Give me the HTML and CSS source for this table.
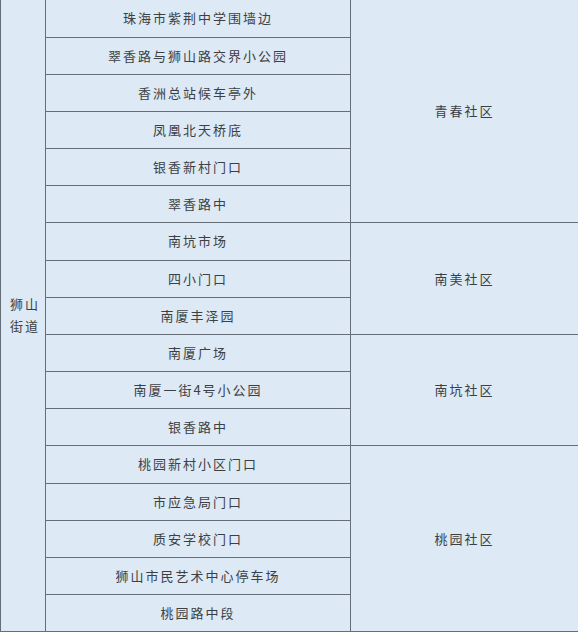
FILE: index.html
```html
<!DOCTYPE html>
<html lang="zh">
<head>
<meta charset="utf-8">
<link rel="stylesheet" href="styles.css">
</head>
<body>
<table class="grid">
  <colgroup>
    <col class="c1"><col class="c2"><col class="c3">
  </colgroup>
  <tbody>
    <tr class="r first"><td class="street" rowspan="17">狮山<br>街道</td><td class="pt">珠海市紫荆中学围墙边</td><td class="com" rowspan="6">青春社区</td></tr>
    <tr class="r"><td class="pt">翠香路与狮山路交界小公园</td></tr>
    <tr class="r"><td class="pt">香洲总站候车亭外</td></tr>
    <tr class="r"><td class="pt">凤凰北天桥底</td></tr>
    <tr class="r"><td class="pt">银香新村门口</td></tr>
    <tr class="r"><td class="pt">翠香路中</td></tr>
    <tr class="r tall"><td class="pt">南坑市场</td><td class="com" rowspan="3">南美社区</td></tr>
    <tr class="r"><td class="pt">四小门口</td></tr>
    <tr class="r"><td class="pt">南厦丰泽园</td></tr>
    <tr class="r"><td class="pt">南厦广场</td><td class="com" rowspan="3">南坑社区</td></tr>
    <tr class="r"><td class="pt">南厦一街4号小公园</td></tr>
    <tr class="r"><td class="pt">银香路中</td></tr>
    <tr class="r tall"><td class="pt">桃园新村小区门口</td><td class="com" rowspan="5">桃园社区</td></tr>
    <tr class="r"><td class="pt">市应急局门口</td></tr>
    <tr class="r"><td class="pt">质安学校门口</td></tr>
    <tr class="r"><td class="pt">狮山市民艺术中心停车场</td></tr>
    <tr class="r"><td class="pt">桃园路中段</td></tr>
  </tbody>
</table>
</body>
</html>
```
FILE: styles.css
```css
html, body {
  margin: 0;
  padding: 0;
  background: #dde9f5;
}
.grid {
  border-collapse: collapse;
  width: 578px;
  table-layout: fixed;
  background: #dde9f5;
  font-family: "Noto Sans CJK SC", "Noto Sans", sans-serif;
  font-size: 13px;
  color: #3c3f44;
}
.c1 { width: 45px; }
.c2 { width: 305px; }
.c3 { width: 228px; }
.grid td {
  border: 1px solid #656d76;
  padding: 0;
  text-align: center;
  vertical-align: middle;
  letter-spacing: 2px;
}
.grid tr.first td { border-top: none; }
.r { height: 37px; }
.r.tall { height: 38px; }
.grid td.street {
  text-align: left;
  padding-left: 9px;
  line-height: 22px;
  border-left: 1px solid #656d76;
}
.grid td.pt {
  line-height: 20px;
}
```
